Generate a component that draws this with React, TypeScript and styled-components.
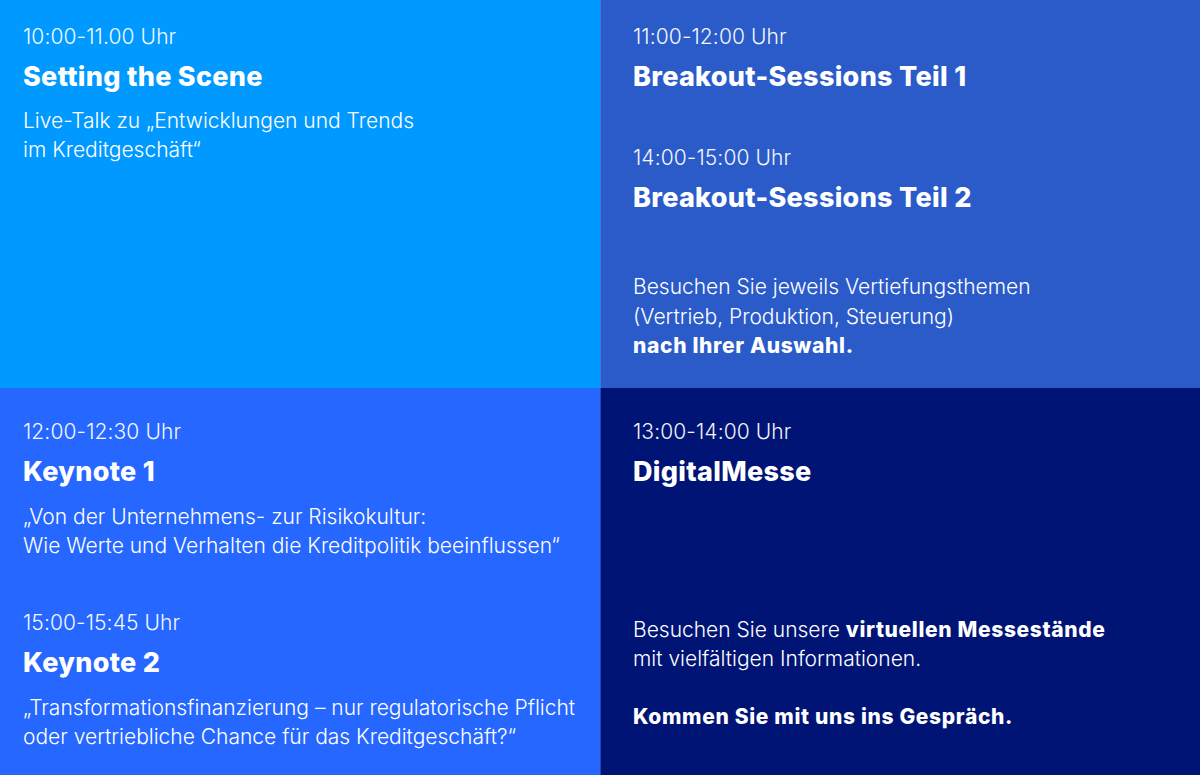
import React from "react";
import styled, { createGlobalStyle } from "styled-components";

const Global = createGlobalStyle`
  html, body { margin: 0; padding: 0; }
  body { font-family: Inter, "Noto Sans", sans-serif; -webkit-font-smoothing: antialiased; }
`;

const Grid = styled.div`
  display: grid;
  grid-template-columns: 600px 600px;
  grid-template-rows: 388px 387px;
  width: 1200px;
  height: 775px;
  overflow: hidden;
`;

const Cell = styled.section<{ $bg: string; $right?: boolean; $bottom?: boolean }>`
  background: ${(p) => p.$bg};
  color: #fff;
  padding: ${(p) => (p.$bottom ? "32px" : "25px")} 20px 0 ${(p) => (p.$right ? "32px" : "23px")};
  box-sizing: border-box;
  display: flex;
  flex-direction: column;
  ${(p) => (p.$right ? "border-left: 1px solid rgba(120,160,255,0.35);" : "")}
`;

const Time = styled.div<{ $gap?: number }>`
  font-size: 21px;
  font-weight: 300;
  line-height: 24px;
  letter-spacing: 0.1px;
  opacity: 0.95;
  margin-top: ${(p) => p.$gap ?? 0}px;
`;

const Title = styled.h2`
  margin: 13px 0 0;
  font-size: 27px;
  font-weight: 800;
  line-height: 30px;
  letter-spacing: 0.3px;
`;

const Desc = styled.p<{ $gap?: number; $lh?: number }>`
  margin: ${(p) => p.$gap ?? 14}px 0 0;
  font-size: 21px;
  font-weight: 300;
  line-height: ${(p) => p.$lh ?? 29}px;
  letter-spacing: 0;
  b {
    font-weight: 800;
    letter-spacing: 0.65px;
  }
`;

export default function App() {
  return (
    <>
      <Global />
      <Grid>
        <Cell $bg="#0099ff">
          <Time>10:00-11.00 Uhr</Time>
          <Title>Setting the Scene</Title>
          <Desc>
            Live-Talk zu „Entwicklungen und Trends
            <br />
            im Kreditgeschäft“
          </Desc>
        </Cell>
        <Cell $bg="#2a5bc9" $right>
          <Time>11:00-12:00 Uhr</Time>
          <Title>Breakout-Sessions Teil 1</Title>
          <Time $gap={54}>14:00-15:00 Uhr</Time>
          <Title>Breakout-Sessions Teil 2</Title>
          <Desc $gap={59} $lh={29.5}>
            Besuchen Sie jeweils Vertiefungsthemen
            <br />
            (Vertrieb, Produktion, Steuerung)
            <br />
            <b>nach Ihrer Auswahl.</b>
          </Desc>
        </Cell>
        <Cell $bg="#2667ff" $bottom>
          <Time>12:00-12:30 Uhr</Time>
          <Title>Keynote 1</Title>
          <Desc $gap={15}>
            „Von der Unternehmens- zur Risikokultur:
            <br />
            Wie Werte und Verhalten die Kreditpolitik beeinflussen“
          </Desc>
          <Time $gap={51}>15:00-15:45 Uhr</Time>
          <Title>Keynote 2</Title>
          <Desc $gap={15}>
            „Transformationsfinanzierung – nur regulatorische Pflicht
            <br />
            oder vertriebliche Chance für das Kreditgeschäft?“
          </Desc>
        </Cell>
        <Cell $bg="#001475" $right $bottom>
          <Time>13:00-14:00 Uhr</Time>
          <Title>DigitalMesse</Title>
          <Desc $gap={128}>
            Besuchen Sie unsere <b>virtuellen Messestände</b>
            <br />
            mit vielfältigen Informationen.
            <br />
            <br />
            <b>Kommen Sie mit uns ins Gespräch.</b>
          </Desc>
        </Cell>
      </Grid>
    </>
  );
}
